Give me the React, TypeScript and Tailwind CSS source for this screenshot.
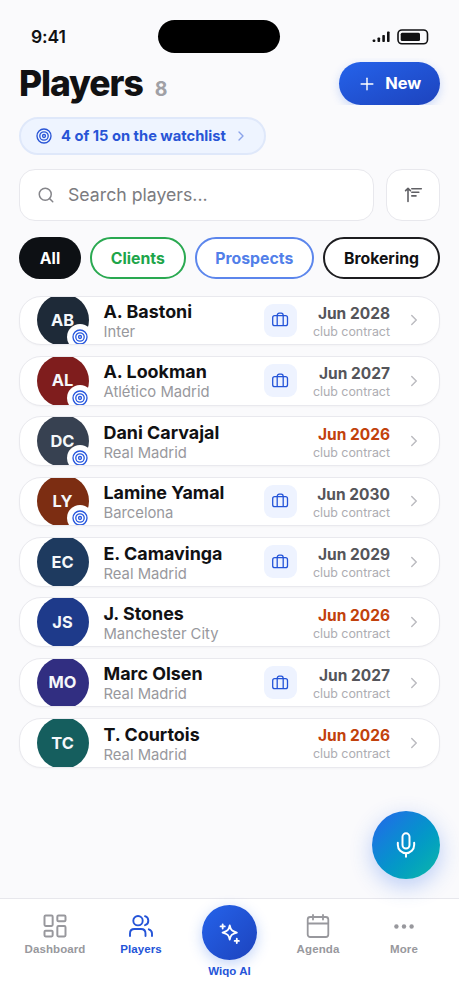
import React from 'react';
import { ChevronRight, LayoutDashboard, Mic, Plus, Search } from 'lucide-react';

interface Player {
  initials: string;
  name: string;
  club: string;
  date: string;
  color: string;
  watched?: boolean;
  luggage?: boolean;
  expiring?: boolean;
}

const players: Player[] = [
  { initials: 'AB', name: 'A. Bastoni', club: 'Inter', date: 'Jun 2028', color: 'bg-[#1e2a38]', watched: true, luggage: true },
  { initials: 'AL', name: 'A. Lookman', club: 'Atlético Madrid', date: 'Jun 2027', color: 'bg-[#7f1d1d]', watched: true, luggage: true },
  { initials: 'DC', name: 'Dani Carvajal', club: 'Real Madrid', date: 'Jun 2026', color: 'bg-[#374151]', watched: true, expiring: true },
  { initials: 'LY', name: 'Lamine Yamal', club: 'Barcelona', date: 'Jun 2030', color: 'bg-[#7c2d12]', watched: true, luggage: true },
  { initials: 'EC', name: 'E. Camavinga', club: 'Real Madrid', date: 'Jun 2029', color: 'bg-[#1e3a5f]', luggage: true },
  { initials: 'JS', name: 'J. Stones', club: 'Manchester City', date: 'Jun 2026', color: 'bg-[#1e3a8a]', expiring: true },
  { initials: 'MO', name: 'Marc Olsen', club: 'Real Madrid', date: 'Jun 2027', color: 'bg-[#312e81]', luggage: true },
  { initials: 'TC', name: 'T. Courtois', club: 'Real Madrid', date: 'Jun 2026', color: 'bg-[#155e5e]', expiring: true },
];

const Target = ({ className }: { className: string }) => (
  <svg viewBox="0 0 24 24" fill="none" stroke="currentColor" strokeWidth="2" className={className}>
    <circle cx="12" cy="12" r="10.5" />
    <circle cx="12" cy="12" r="6.3" />
    <circle cx="12" cy="12" r="2.2" />
  </svg>
);

const Luggage = () => (
  <svg viewBox="0 0 18 18" fill="none" stroke="currentColor" strokeWidth="1.3" className="h-[18px] w-[18px]">
    <rect x="1.7" y="4.7" width="14.8" height="10" rx="2" />
    <path d="M6.2 14.7v-10c0-1.6.7-2.500 2-2.500h2c1.300 0 2 .9 2 2.500v10" />
  </svg>
);

const SortIcon = () => (
  <svg viewBox="0 0 20 18" fill="none" stroke="currentColor" strokeWidth="1.6" strokeLinecap="round" strokeLinejoin="round" className="h-[18px] w-5">
    <path d="M5 15.500V3M2.600 4.600l2.400-2.200 2.400 2.200M8.800 2.700h9.500M8.800 6.300h7M8.800 9.900h4.200" />
  </svg>
);

const UsersIcon = () => (
  <svg viewBox="0 0 26 24" fill="none" stroke="currentColor" strokeWidth="1.9" strokeLinecap="round" className="h-6 w-[26px]">
    <circle cx="10" cy="6.700" r="4.700" />
    <path d="M2 22v-2.500c0-2.800 2-4.500 4.500-4.500h6.500c2.500 0 4.500 1.700 4.500 4.500V22M17 2.200c2 .6 3.300 2.300 3.300 4.500s-1.300 3.900-3.300 4.500M20.800 15.300c2.100.7 3.200 2.200 3.200 4.200V22" />
  </svg>
);

const SparklesIcon = () => (
  <svg viewBox="0 0 24 24" fill="none" stroke="currentColor" strokeWidth="2" strokeLinecap="round" strokeLinejoin="round" className="h-[22px] w-[22px]">
    <path d="M11.700 3.800c1 4.900 2.300 6.200 7.800 7.700-5.500 1.500-6.800 2.800-7.800 7.700-1-4.900-2.300-6.200-7.800-7.700 5.500-1.500 6.800-2.800 7.800-7.700Z" />
    <path d="M4 2.500v4.600M1.700 4.800h4.600M19.400 18.300v4.600M17.100 20.600h4.600" />
  </svg>
);

const CalendarIcon = () => (
  <svg viewBox="0 0 24 24" fill="none" stroke="currentColor" strokeWidth="1.8" strokeLinecap="round" className="h-6 w-6">
    <rect x="1.700" y="3" width="20.600" height="20" rx="2.500" />
    <path d="M7 1v4.500M17 1v4.500M2 9.500h20" />
  </svg>
);

const DotsIcon = () => (
  <svg viewBox="0 0 20 5" fill="currentColor" className="h-[5px] w-5">
    <circle cx="2.400" cy="2.500" r="2.200" />
    <circle cx="10" cy="2.500" r="2.200" />
    <circle cx="17.600" cy="2.500" r="2.200" />
  </svg>
);

const BatteryIcon = () => (
  <svg viewBox="0 0 32 16" className="h-4 w-8">
    <rect x="1" y="1" width="29.500" height="13.800" rx="4" fill="none" stroke="#111113" strokeWidth="1.600" />
    <rect x="3.700" y="3.700" width="19.300" height="8.400" rx="1.500" fill="#111113" />
  </svg>
);

const StatusBar = () => (
  <div className="flex h-[58px] shrink-0 items-start">
    <span className="mt-[25px] ml-[31px] w-[127px] text-[17.500px] leading-6 font-semibold tracking-[-0.100px]">9:41</span>
    <div className="mt-5 h-[33px] w-[122px] rounded-full bg-black" />
    <div className="mt-[29px] ml-[92px] flex items-center gap-[7px]">
      <svg viewBox="0 0 18 12" fill="currentColor" className="h-3 w-[18px]">
        <rect x="0.700" y="8.500" width="2.600" height="2.600" rx=".8" />
        <rect x="5.500" y="6.500" width="2.600" height="4.600" rx=".8" />
        <rect x="10.300" y="4" width="2.600" height="7.100" rx=".8" />
        <rect x="15" y="0.500" width="2.600" height="10.600" rx=".8" />
      </svg>
      <BatteryIcon />
    </div>
  </div>
);

const PlayerRow = ({ player }: { player: Player }) => (
  <div className="flex h-[49.700px] shrink-0 items-center overflow-hidden rounded-[22px] border border-[#e9e9ee] bg-white pr-4 pl-[16.500px] shadow-[0_1px_2px_rgba(0,0,0,0.03)]">
    <div className={`relative flex h-[52px] w-[52px] shrink-0 items-center justify-center rounded-full text-[16.400px] font-bold text-[#f5f7fa] ${player.color}`}>
      {player.initials}
      {player.watched && (
        <span className="absolute top-[30px] left-[30px] flex h-[26px] w-[26px] items-center justify-center rounded-full bg-white text-[#2858de]">
          <Target className="h-4 w-4" />
        </span>
      )}
    </div>
    <div className="mt-[2.500px] ml-[15px] flex-1">
      <div className="text-[17.900px] leading-[21px] font-bold">{player.name}</div>
      <div className="text-[14.800px] leading-[20px] text-[#98989d]">{player.club}</div>
    </div>
    {player.luggage && (
      <div className="mr-4 flex h-[33px] w-[33px] items-center justify-center rounded-[9px] bg-[#eef3ff] text-[#2454d8]">
        <Luggage />
      </div>
    )}
    <div className="mt-[3px] text-right">
      <div className={`text-[15.500px] leading-[19px] font-bold ${player.expiring ? 'text-[#c2410c]' : 'text-[#55555a]'}`}>{player.date}</div>
      <div className="text-[12.400px] leading-[17px] text-[#adadb2]">club contract</div>
    </div>
    <ChevronRight className="ml-[15px] h-[18px] w-[18px] text-[#bcbcc1]" strokeWidth={2} />
  </div>
);

const NavItem = ({ icon, label, active }: { icon: React.ReactNode; label: string; active?: boolean }) => (
  <div className={`flex w-[86px] flex-col items-center pt-[14px] ${active ? 'text-[#2454d8]' : 'text-[#98989d]'}`}>
    <div className="flex h-[26px] items-center">{icon}</div>
    <span className="mt-[3px] font-['Liberation_Sans',Arial,sans-serif] text-[11.500px] leading-[14px] font-bold tracking-[0.100px]">{label}</span>
  </div>
);

export default function App() {
  return (
    <div className="flex h-[995px] w-[459px] flex-col overflow-hidden bg-[#fafafc] font-[Inter,sans-serif] text-[#111113] [font-optical-sizing:none] [font-variation-settings:'opsz'_14]">
      <StatusBar />

      <header className="flex h-[47px] shrink-0 items-end justify-between overflow-hidden px-[19px]">
        <div className="flex items-baseline gap-[12px]">
          <h1 className="text-[35.500px] leading-[43px] font-extrabold tracking-[-1.100px]">Players</h1>
          <span className="text-[19.500px] font-bold text-[#a0a0a5]">8</span>
        </div>
        <button className="flex h-[43px] w-[101.500px] items-center justify-center gap-[8px] rounded-full bg-linear-to-br from-[#2563eb] to-[#1d43bd] text-[16.400px] font-bold text-white shadow-[0_3px_10px_rgba(37,99,235,0.22)]">
          <Plus className="h-5 w-5" strokeWidth={1.700} />
          New
        </button>
      </header>

      <div className="mt-3 ml-[19px] flex h-[38px] w-[247px] shrink-0 items-center rounded-full border-2 border-[#dfe8fa] bg-[#eef4ff] pl-[15px] text-[#2854d6]">
        <Target className="h-4 w-4" />
        <span className="ml-[9px] text-[14.700px] font-bold whitespace-nowrap">4 of 15 on the watchlist</span>
        <ChevronRight className="ml-[7px] h-4 w-4 opacity-50" />
      </div>

      <div className="mt-[14px] flex gap-3 px-[19px]">
        <div className="flex h-[52px] flex-1 items-center rounded-2xl border-[1.500px] border-[#e8e8ed] bg-white pl-[17px]">
          <Search className="h-[18px] w-[18px] text-[#85858a]" strokeWidth={2} />
          <span className="ml-[13px] text-[17.700px] text-[#7b7b80]">Search players...</span>
        </div>
        <button className="flex h-[52px] w-[54px] items-center justify-center rounded-2xl border-[1.500px] border-[#e8e8ed] bg-white text-[#606065]">
          <SortIcon />
        </button>
      </div>

      <div className="mt-4 flex h-[42px] shrink-0 justify-between px-[19px] text-[15.800px] font-bold">
        <button className="w-[62px] rounded-full bg-[#0d1014] pt-px text-white">All</button>
        <button className="w-[95.500px] rounded-full border-2 border-[#2aa951] bg-white pt-px text-[#1da54a]">Clients</button>
        <button className="w-[119.500px] rounded-full border-2 border-[#5c86ec] bg-white pt-px text-[#527fe9]">Prospects</button>
        <button className="w-[117px] rounded-full border-2 border-[#1d1d20] bg-white pt-px">Brokering</button>
      </div>

      <main className="relative mt-[16.500px] flex flex-1 flex-col gap-[10.700px] px-[19px]">
        {players.map((player) => (
          <PlayerRow key={player.initials} player={player} />
        ))}
        <button className="absolute right-[19px] bottom-[19px] flex h-[68px] w-[68px] items-center justify-center rounded-full bg-linear-to-br from-[#2563eb] to-[#14b8a6] text-white shadow-[0_7px_22px_rgba(37,99,235,0.3)]">
          <Mic className="h-7 w-7" strokeWidth={1.700} />
        </button>
      </main>

      <nav className="flex h-[97px] shrink-0 justify-center border-t border-[#e7e7ec] bg-white">
        <NavItem icon={<LayoutDashboard className="h-[28px] w-[28px]" strokeWidth={1.700} />} label="Dashboard" />
        <NavItem icon={<UsersIcon />} label="Players" active />
        <div className="flex w-[91px] flex-col items-center pt-[6px] text-[#2454d8]">
          <div className="flex h-[55px] w-[55px] items-center justify-center rounded-full bg-linear-to-br from-[#2563eb] to-[#1d43bd] text-white shadow-[0_4px_14px_rgba(37,99,235,0.28)]">
            <SparklesIcon />
          </div>
          <span className="mt-[4px] font-['Liberation_Sans',Arial,sans-serif] text-[11.500px] leading-[14px] font-bold">Wiqo AI</span>
        </div>
        <NavItem icon={<CalendarIcon />} label="Agenda" />
        <NavItem icon={<DotsIcon />} label="More" />
      </nav>
    </div>
  );
}
